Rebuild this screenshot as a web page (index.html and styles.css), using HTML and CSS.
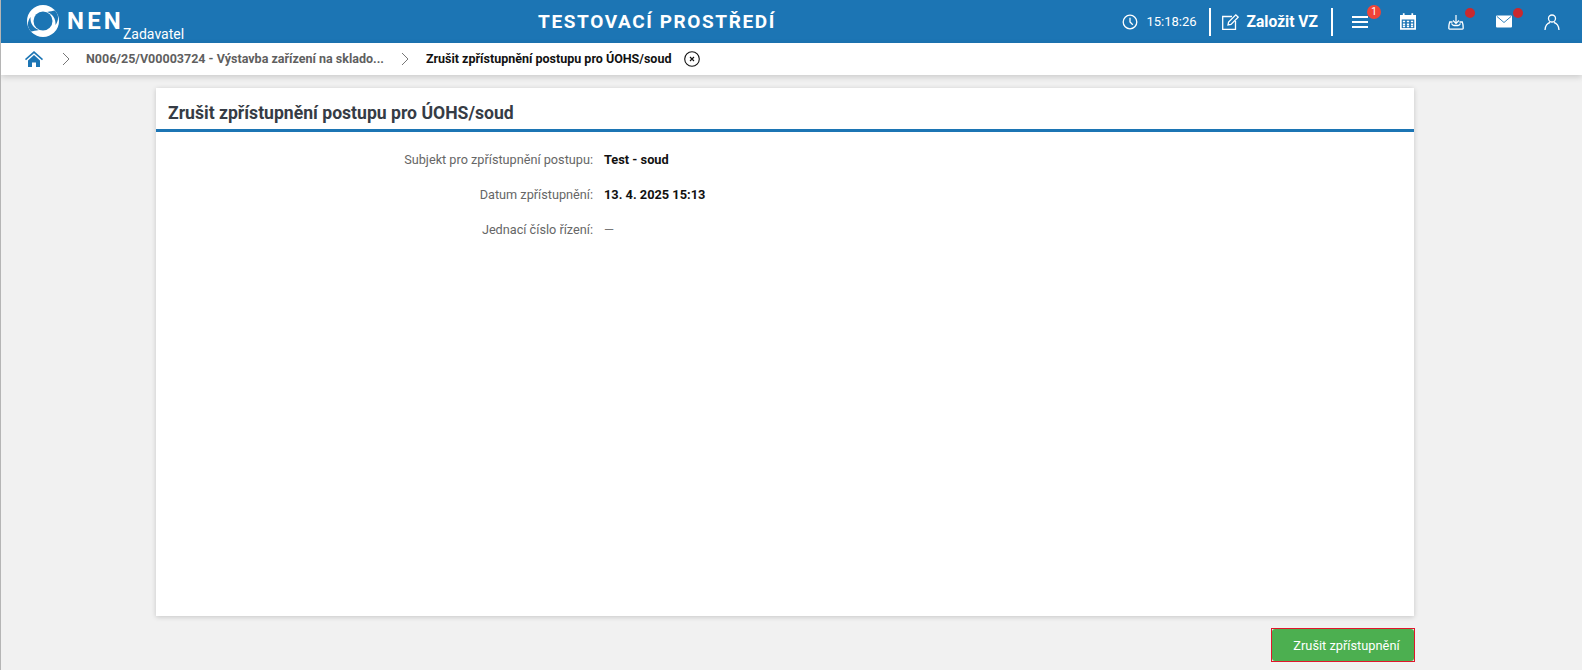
FILE: index.html
```html
<!DOCTYPE html>
<html lang="cs">
<head>
<meta charset="utf-8">
<title>Zrušit zpřístupnění postupu pro ÚOHS/soud</title>
<link rel="stylesheet" href="styles.css">
</head>
<body>
<header class="topbar">
  <div class="brand">
    <svg class="logo" viewBox="0 0 32 32" width="32" height="32">
      <circle cx="16" cy="16" r="16" fill="#fff"/>
      <circle cx="16" cy="16" r="9.500" fill="#1c75b4"/>
      <path fill="#1c75b4" d="M20 7C25 8.500 29 13 28.500 20C32 15 32 10 28 5.500C26 6 23 6.300 20 7z"/>
      <path fill="#1c75b4" d="M12 25C7 23.500 3 19 3.500 12C0 17 0 22 4 26.500C6 26 9 25.700 12 25z"/>
    </svg>
    <span class="nen">NEN</span>
    <span class="role">Zadavatel</span>
  </div>
  <div class="env">TESTOVACÍ PROSTŘEDÍ</div>
  <div class="tools">
    <svg class="ico-clock" viewBox="0 0 16 16" width="16" height="16" fill="none" stroke="#fff" stroke-width="1.300">
      <circle cx="8" cy="8" r="6.800"/><path d="M8 3.800V8l2.800 2.800"/>
    </svg>
    <span class="time">15:18:26</span>
    <span class="sep"></span>
    <a class="create">
      <svg viewBox="0 0 18 18" width="18" height="18" fill="none" stroke="#fff" stroke-width="1.300">
        <path d="M11 3.500H1.700V16.300H14.500V8"/><path d="M7 12l.6-3L14.800 1.800l2.400 2.400L10 11.400z"/>
      </svg>
      Založit VZ
    </a>
    <span class="sep"></span>
    <span class="tool tool-menu">
      <svg viewBox="0 0 16 14" width="16" height="14" fill="#fff"><rect y="1" width="16" height="2"/><rect y="6" width="16" height="2"/><rect y="11" width="16" height="2"/></svg>
      <span class="badge">1</span>
    </span>
    <span class="tool">
      <svg viewBox="1 1 14 14.500" width="16" height="17"><path fill="#fff" d="M1 2.500H3.500V1H5V2.500H11V1H12.500V2.500H15V15.500H1z"/><path fill="#1c75b4" d="M2.500 6.500H13.500V14H2.500z"/><path fill="#fff" d="M3.500 7.500h2v1.500h-2zM7 7.500h2v1.500H7zM10.500 7.500h2v1.500h-2zM3.500 10h2v1.500h-2zM7 10h2v1.500H7zM10.500 10h2v1.500h-2zM3.500 12h2v1.300h-2zM7 12h2v1.300H7zM10.500 12h2v1.300h-2z"/></svg>
    </span>
    <span class="tool">
      <svg viewBox="0 0 16 16" width="16" height="16" fill="none" stroke="#fff" stroke-width="1.300"><path d="M8 1v8.500M5 6.500L8 9.500l3-3" stroke-width="1.200"/><path d="M4.500 8H1.700C1 10 .8 12 .8 14.300c0 .5.300.8.800.8H14.400c.5 0 .8-.3.800-.8C15.200 12 15 10 14.300 8H11.500"/><path d="M3.500 9.500c.8 1.500 1.200 2 2.500 2H10c1.300 0 1.700-.5 2.500-2"/></svg>
      <span class="dot"></span>
    </span>
    <span class="tool">
      <svg viewBox="0 0 16 12" width="17" height="13"><rect width="16" height="12" rx="1" fill="#fff"/><path d="M1 1l7 6 7-6" fill="none" stroke="#1c75b4" stroke-width=".9"/></svg>
      <span class="dot"></span>
    </span>
    <span class="tool">
      <svg viewBox="0 0 16 16" width="16" height="16" fill="none" stroke="#fff" stroke-width="1.300"><circle cx="8" cy="4.500" r="3.500"/><path d="M1 16c0-4 2.500-7 5-7.500M15 16c0-4-2.500-7-5-7.500"/></svg>
    </span>
  </div>
</header>

<nav class="crumbs">
  <svg class="home" viewBox="0 0 18 16" width="18" height="16"><path fill="#1c75b4" d="M9 0L18 8l-1 1.200L9 2.200 1 9.200 0 8z"/><path fill="#1c75b4" d="M3 9.500L9 4l6 5.500V16h-4v-4.500H7V16H3z"/></svg>
  <svg class="chev" viewBox="0 0 8 14" width="8" height="14" fill="none" stroke="#777" stroke-width="1"><path d="M1 1l6 6-6 6"/></svg>
  <span class="crumb">N006/25/V00003724 - Výstavba zařízení na sklado...</span>
  <svg class="chev" viewBox="0 0 8 14" width="8" height="14" fill="none" stroke="#777" stroke-width="1"><path d="M1 1l6 6-6 6"/></svg>
  <span class="crumb current">Zrušit zpřístupnění postupu pro ÚOHS/soud</span>
  <svg class="close" viewBox="0 0 16 16" width="16" height="16" fill="none" stroke="#111" stroke-width="1.100"><circle cx="8" cy="8" r="7.300"/><path d="M6 6l4 4M10 6l-4 4"/></svg>
</nav>

<main class="page">
  <section class="card">
    <h1 class="card-title">Zrušit zpřístupnění postupu pro ÚOHS/soud</h1>
    <dl class="fields">
      <div class="field"><dt>Subjekt pro zpřístupnění postupu:</dt><dd>Test - soud</dd></div>
      <div class="field"><dt>Datum zpřístupnění:</dt><dd>13. 4. 2025 15:13</dd></div>
      <div class="field"><dt>Jednací číslo řízení:</dt><dd class="empty">—</dd></div>
    </dl>
  </section>
  <div class="actions">
    <div class="btn-frame"><button class="btn" type="button">Zrušit zpřístupnění</button></div>
  </div>
</main>
</body>
</html>
```
FILE: styles.css
```css
* { box-sizing: border-box; }
html, body { height: 100%; }
body {
  margin: 0;
  height: 670px;
  overflow: hidden;
  background: #f1f1f1;
  border-left: 1px solid #b5b5b5;
  font-family: Roboto, "Liberation Sans", sans-serif;
  font-size: 13px;
  color: #111;
}
.topbar {
  height: 43px;
  background: #1c75b4;
  color: #fff;
  display: flex;
  align-items: center;
  position: relative;
  padding-left: 26px;
}
.brand { display: flex; align-items: center; height: 43px; width: 480px; }
.logo { margin-bottom: 2px; }
.nen {
  margin-left: 8px;
  font-size: 24px;
  font-weight: 700;
  letter-spacing: 3.2px;
  line-height: 28px;
  margin-bottom: 2px;
}
.role { align-self: flex-end; font-size: 14px; line-height: 16px; margin-left: -1px; margin-bottom: 1px; }
.env {
  width: 262px;
  margin-left: 19px;
  text-align: center;
  font-size: 19px;
  font-weight: 700;
  letter-spacing: 1.600px;
  white-space: nowrap;
}
.tools { margin-left: auto; display: flex; align-items: center; height: 43px; padding-right: 22px; }
.ico-clock { margin-right: 8px; }
.time { font-size: 13px; font-weight: 400; margin-right: 12px; }
.sep { width: 2px; height: 28px; background: #fff; }
.create { display: flex; align-items: center; gap: 8px; font-size: 15.600px; font-weight: 700; margin: 0 13px 0 10px; }
.tool { position: relative; width: 16px; height: 16px; margin-left: 20px; display: flex; align-items: center; justify-content: center; flex: none; }
.tool + .tool { margin-left: 32px; }
.tool-menu { margin-left: 19px; }
.badge {
  position: absolute; top: -9px; left: 15px;
  width: 14px; height: 14px; border-radius: 50%;
  background: #f04438; color: #fff;
  font-size: 10px; line-height: 14px; text-align: center;
}
.dot { position: absolute; top: -6px; left: 17px; width: 10px; height: 10px; border-radius: 50%; background: #c9292e; }
.crumbs {
  height: 32px;
  background: #fff;
  display: flex;
  align-items: center;
  padding: 0 0 1px 24px;
  box-shadow: 0 2px 6px rgba(0,0,0,.16);
  position: relative;
  font-weight: 700;
  font-size: 12.500px;
}
.home { margin-right: 19px; }
.chev { margin-right: 16px; }
.crumb { color: #5f5f5f; margin-right: 17px; white-space: nowrap; }
.crumb + .chev { margin-right: 17px; }
.crumb.current { color: #111; margin-right: 13px; }
.page { padding: 13px 168px 0 155px; display: flex; flex-direction: column; }
.card { height: 528px; background: #fff; box-shadow: 0 1px 5px rgba(0,0,0,.18); }
.card-title {
  margin: 0;
  height: 44px;
  padding: 13px 12px 0;
  border-bottom: 3px solid #1c75b4;
  font-size: 17.600px;
  line-height: 24px;
  font-weight: 700;
  color: #363c45;
}
.fields { margin: 0; padding: 18px 0 0; font-size: 12.800px; }
.field { display: flex; height: 35px; line-height: 20px; }
dt { width: 437px; text-align: right; color: #666; font-size: 12.700px; }
dd { margin: 0 0 0 11px; font-weight: 700; color: #111; }
dd.empty { font-weight: 400; color: #777; }
.actions { display: flex; justify-content: flex-end; margin-top: 12px; margin-right: -1px; }
.btn-frame { width: 144px; height: 34px; border: 1px solid #e0162b; }
.btn {
  display: block;
  width: 100%;
  height: 100%;
  padding: 0 0 0 7px;
  background: #4caf50;
  color: #fff;
  border: 0;
  border-radius: 3px;
  font: 400 12.800px Roboto, "Liberation Sans", sans-serif;
}
```
